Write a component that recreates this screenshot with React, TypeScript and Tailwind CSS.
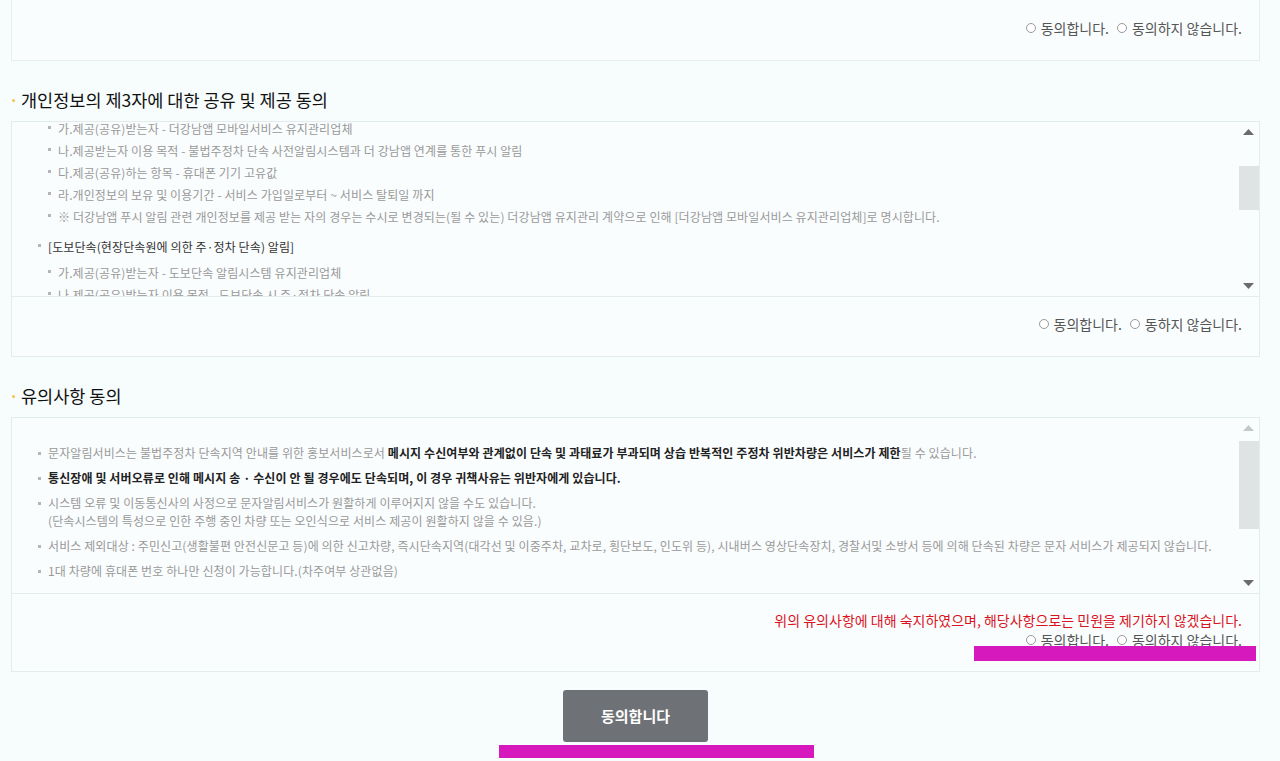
import React from "react";

const font = "font-['Noto_Sans_CJK_KR','Noto_Sans',sans-serif]";

function Radio({ label }: { label: string }) {
  return (
    <span className="inline-flex items-center gap-[5px]">
      <span className="inline-block h-[10px] w-[10px] rounded-full border border-[#9a9a9a] bg-white" />
      <span>{label}</span>
    </span>
  );
}

function RadioRow({ second }: { second: string }) {
  return (
    <div className="flex items-center justify-end gap-[8px] text-[14px] leading-[20px] text-[#555]">
      <Radio label="동의합니다." />
      <Radio label={second} />
    </div>
  );
}

function Dot() {
  return <span className="mr-[7px] mt-[8px] inline-block h-[3px] w-[3px] shrink-0 bg-[#b5b5b5]" />;
}

function ScrollBar({ thumbTop, thumbH, upDisabled }: { thumbTop: number; thumbH: number; upDisabled?: boolean }) {
  return (
    <div className="flex w-[21px] shrink-0 flex-col items-center">
      <div className="flex h-[20px] w-full items-center justify-center">
        <svg width="11" height="6" viewBox="0 0 11 6">
          <polygon points="5.5,0 11,6 0,6" fill={upDisabled ? "#c4c8c8" : "#6b6b6b"} />
        </svg>
      </div>
      <div className="w-full flex-1 pl-[1px]">
        <div className="w-[20px] bg-[#dfe3e3]" style={{ marginTop: thumbTop, height: thumbH }} />
      </div>
      <div className="flex h-[20px] w-full items-center justify-center">
        <svg width="11" height="6" viewBox="0 0 11 6">
          <polygon points="0,0 11,0 5.5,6" fill="#6b6b6b" />
        </svg>
      </div>
    </div>
  );
}

function Heading({ children }: { children: React.ReactNode }) {
  return (
    <div className="mt-[27px] mb-[9px] flex items-center text-[17.5px] leading-[24px] text-[#111]">
      <span className="ml-[1px] mr-[6px] inline-block h-[3px] w-[3px] rounded-full bg-[#f3c24a]" />
      {children}
    </div>
  );
}

const box2Items = [
  "가.제공(공유)받는자 - 더강남앱 모바일서비스 유지관리업체",
  "나.제공받는자 이용 목적 - 불법주정차 단속 사전알림시스템과 더 강남앱 연계를 통한 푸시 알림",
  "다.제공(공유)하는 항목 - 휴대폰 기기 고유값",
  "라.개인정보의 보유 및 이용기간 - 서비스 가입일로부터 ~ 서비스 탈퇴일 까지",
  "※ 더강남앱 푸시 알림 관련 개인정보를 제공 받는 자의 경우는 수시로 변경되는(될 수 있는) 더강남앱 유지관리 계약으로 인해 [더강남앱 모바일서비스 유지관리업체]로 명시합니다.",
];

const box2Items2 = [
  "가.제공(공유)받는자 - 도보단속 알림시스템 유지관리업체",
  "나.제공(공유)받는자 이용 목적 - 도보단속 시 주·정차 단속 알림",
  "다.제공(공유)하는 항목 - 휴대폰 기기 고유값",
];

export default function App() {
  return (
    <div className={`relative min-h-[761px] bg-[#f7fcfd] ${font}`}>
      <div className="ml-[11px] w-[1249px] pb-[19px]">
        {/* Box 1 (top cut off) */}
        <div className="flex h-[61px] items-center justify-end border-x border-b border-[#e6eeef] bg-[#fafdfe] pb-[5px] pr-[17px]">
          <RadioRow second="동의하지 않습니다." />
        </div>

        <Heading>개인정보의 제3자에 대한 공유 및 제공 동의</Heading>

        {/* Box 2 */}
        <div className="border border-[#e3ebed] bg-[#fafdfe]">
          <div className="flex h-[174px]">
            <div className="flex-1 overflow-hidden text-[12px] leading-[22px] tracking-[0.1px] text-[#999]">
              <div className="-mt-[4px] pl-[26px]">
                <ul className="pl-[10px]">
                  {box2Items.map((t) => (
                    <li key={t} className="flex">
                      <Dot />
                      <span>{t}</span>
                    </li>
                  ))}
                </ul>
                <div className="mt-[8px] flex text-[#333]">
                  <Dot />
                  <span>[도보단속(현장단속원에 의한 주·정차 단속) 알림]</span>
                </div>
                <ul className="mt-[4px] pl-[10px]">
                  {box2Items2.map((t) => (
                    <li key={t} className="flex">
                      <Dot />
                      <span>{t}</span>
                    </li>
                  ))}
                </ul>
              </div>
            </div>
            <ScrollBar thumbTop={24} thumbH={44} />
          </div>
          <div className="flex h-[60px] items-center justify-end border-t border-[#e3ebed] pb-[5px] pr-[17px]">
            <RadioRow second="동하지 않습니다." />
          </div>
        </div>

        <Heading>유의사항 동의</Heading>

        {/* Box 3 */}
        <div className="border border-[#e3ebed] bg-[#fafdfe]">
          <div className="flex h-[175px]">
            <div className="flex-1 overflow-hidden pt-[26px] pl-[26px] text-[12px] leading-[18px] tracking-[0.1px] text-[#999]">
              <ul className="flex flex-col gap-[7px]">
                <li className="flex">
                  <Dot />
                  <span>
                    문자알림서비스는 불법주정차 단속지역 안내를 위한 홍보서비스로서{" "}
                    <b className="font-bold text-[#222]">
                      메시지 수신여부와 관계없이 단속 및 과태료가 부과되며 상습 반복적인 주정차 위반차량은 서비스가 제한
                    </b>
                    될 수 있습니다.
                  </span>
                </li>
                <li className="flex">
                  <Dot />
                  <b className="font-bold text-[#222]">
                    통신장애 및 서버오류로 인해 메시지 송 · 수신이 안 될 경우에도 단속되며, 이 경우 귀책사유는 위반자에게 있습니다.
                  </b>
                </li>
                <li className="flex">
                  <Dot />
                  <span>
                    시스템 오류 및 이동통신사의 사정으로 문자알림서비스가 원활하게 이루어지지 않을 수도 있습니다.
                    <br />
                    (단속시스템의 특성으로 인한 주행 중인 차량 또는 오인식으로 서비스 제공이 원활하지 않을 수 있음.)
                  </span>
                </li>
                <li className="flex">
                  <Dot />
                  <span>
                    서비스 제외대상 : 주민신고(생활불편 안전신문고 등)에 의한 신고차량, 즉시단속지역(대각선 및 이중주차, 교차로, 횡단보도, 인도위 등), 시내버스 영상단속장치, 경찰서및 소방서 등에 의해 단속된 차량은 문자 서비스가 제공되지 않습니다.
                  </span>
                </li>
                <li className="flex">
                  <Dot />
                  <span>1대 차량에 휴대폰 번호 하나만 신청이 가능합니다.(차주여부 상관없음)</span>
                </li>
              </ul>
            </div>
            <ScrollBar thumbTop={3} thumbH={88} upDisabled />
          </div>
          <div className="flex h-[78px] flex-col items-end border-t border-[#e3ebed] pt-[16px] pr-[17px]">
            <div className="text-[14px] leading-[20px] text-[#d9141e]">
              위의 유의사항에 대해 숙지하였으며, 해당사항으로는 민원을 제기하지 않겠습니다.
            </div>
            <RadioRow second="동의하지 않습니다." />
          </div>
        </div>

        <div className="mt-[18px] flex justify-center">
          <button className="h-[52px] w-[145px] rounded-[3px] bg-[#6e7176] text-[15px] font-bold text-white">
            동의합니다
          </button>
        </div>
      </div>

      <div className="absolute left-[974px] top-[646px] h-[15px] w-[282px] bg-[#d619bd]" />
      <div className="absolute left-[499px] top-[745px] h-[13px] w-[315px] bg-[#d619bd]" />
    </div>
  );
}
